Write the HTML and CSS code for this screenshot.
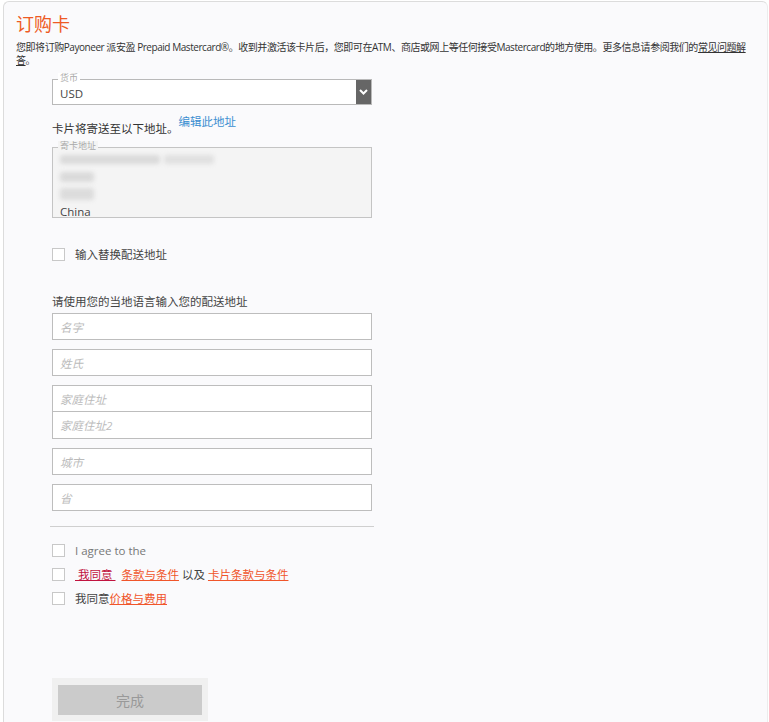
FILE: index.html
```html
<!DOCTYPE html>
<html lang="zh-CN">
<head>
<meta charset="utf-8">
<title>订购卡</title>
<link rel="stylesheet" href="styles.css">
</head>
<body>
<div class="panel">
  <h1 class="title">订购卡</h1>
  <p class="intro">您即将订购Payoneer 派安盈 Prepaid Mastercard®。收到并激活该卡片后，您即可在ATM、商店或网上等任何接受Mastercard的地方使用。更多信息请参阅我们的<a class="faq" href="#">常见问题解答</a>。</p>

  <div class="form">
    <div class="field select-field">
      <span class="legend">货币</span>
      <div class="select">
        <span class="select-value">USD</span>
        <span class="select-arrow">
          <svg width="9" height="6" viewBox="0 0 9 6"><path d="M1 1 L4.5 4.5 L8 1" fill="none" stroke="#fff" stroke-width="2"/></svg>
        </span>
      </div>
    </div>

    <div class="ship-note">
      <span class="ship-text">卡片将寄送至以下地址。</span><a class="edit-link" href="#">编辑此地址</a>
    </div>

    <div class="field address-field">
      <span class="legend">寄卡地址</span>
      <div class="address">
        <div class="addr-line"><span class="blur b1"></span><span class="blur b1b"></span></div>
        <div class="addr-line"><span class="blur b2"></span></div>
        <div class="addr-line"><span class="blur b3"></span></div>
        <div class="addr-line country">China</div>
      </div>
    </div>

    <label class="check alt-check"><span class="box"></span><span class="check-label">输入替换配送地址</span></label>

    <p class="local-note">请使用您的当地语言输入您的配送地址</p>

    <div class="inputs">
      <div class="input">名字</div>
      <div class="input">姓氏</div>
      <div class="input-group">
        <div class="input">家庭住址</div>
        <div class="input">家庭住址2</div>
      </div>
      <div class="input">城市</div>
      <div class="input">省</div>
    </div>

    <hr class="divider">

    <div class="agreements">
      <label class="check"><span class="box"></span><span class="check-label muted">I agree to the</span></label>
      <label class="check"><span class="box"></span><span class="check-label"><a class="link crimson" href="#">&nbsp;我同意&nbsp;</a>&nbsp; <a class="link orange" href="#">条款与条件</a> 以及 <a class="link orange" href="#">卡片条款与条件</a></span></label>
      <label class="check"><span class="box"></span><span class="check-label">我同意<a class="link orange" href="#">价格与费用</a></span></label>
    </div>

    <div class="actions">
      <button class="submit" type="button">完成</button>
    </div>
  </div>
</div>
</body>
</html>
```

FILE: styles.css
```css
html, body {
  margin: 0;
  padding: 0;
  background: #ffffff;
  font-family: "Open Sans", "Noto Sans CJK SC", sans-serif;
  color: #333;
}

.panel {
  margin: 1px 1px 0 3px;
  border: 1px solid #dcdcdc;
  border-bottom: none;
  border-right-color: #ececec;
  border-radius: 6px 6px 0 0;
  background: #fafafc;
  height: 721px;
  overflow: hidden;
  box-sizing: border-box;
  padding: 8px 0 0 12px;
}

.title {
  margin: 0;
  font-size: 18px;
  font-weight: normal;
  color: #ee5a24;
  line-height: 28px;
}

.intro {
  margin: 3px 0 0 0;
  width: 738px;
  font-size: 10px;
  line-height: 13px;
  color: #333;
  letter-spacing: -0.45px;
}

.faq {
  color: #333;
  text-decoration: underline;
}

.form {
  width: 320px;
  margin: 12px 0 0 36px;
}

.field {
  position: relative;
}

.legend {
  position: absolute;
  left: 6px;
  top: -6px;
  font-size: 9px;
  line-height: 10px;
  color: #aaa;
  background: #fafafc;
  padding: 0 2px;
}

.select-field .legend {
  background: #fff;
}

.select {
  height: 26px;
  border: 1px solid #b9b9b9;
  background: #fff;
  display: flex;
  align-items: center;
  box-sizing: border-box;
}

.select-value {
  flex: 1;
  padding-left: 7px;
  padding-top: 2px;
  font-size: 11.5px;
  color: #444;
}

.select-arrow {
  width: 15px;
  align-self: stretch;
  background: #666;
  display: flex;
  align-items: center;
  justify-content: center;
}

.ship-note {
  margin-top: 7px;
  height: 25px;
  display: flex;
  align-items: flex-end;
  font-size: 11.5px;
  color: #333;
}

.ship-text {
  line-height: 16px;
}

.edit-link {
  color: #3b8fd1;
  text-decoration: none;
  align-self: flex-start;
  line-height: 16px;
  margin-top: 2px;
}

.address-field {
  margin-top: 10px;
}

.address-field .legend {
  background: #f4f4f4;
}

.address {
  height: 71px;
  border: 1px solid #c4c4c4;
  background: #f4f4f4;
  box-sizing: border-box;
  padding: 3px 0 0 7px;
}

.addr-line {
  height: 17px;
  display: flex;
  align-items: center;
  gap: 4px;
}

.blur {
  display: block;
  height: 9px;
  background: #dadada;
  filter: blur(2px);
  border-radius: 3px;
}

.b1 { width: 100px; }
.b1b { width: 50px; background: #e0e0e0; }
.b2 { width: 34px; height: 10px; }
.b3 { width: 34px; height: 12px; background: #dcdcdc; }

.country {
  font-size: 11.5px;
  color: #444;
  padding-top: 1px;
}

.check {
  display: flex;
  align-items: center;
  gap: 10px;
  font-size: 11.5px;
  color: #444;
  height: 16px;
}

.box {
  width: 11px;
  height: 11px;
  border: 1px solid #c8c8c8;
  background: #fff;
  flex: none;
}

.alt-check {
  margin-top: 28px;
}

.local-note {
  margin: 32px 0 0 0;
  font-size: 11.5px;
  line-height: 16px;
  color: #444;
}

.inputs {
  margin-top: 3px;
  display: flex;
  flex-direction: column;
  gap: 9px;
}

.input {
  height: 27px;
  border: 1px solid #bdbdbd;
  background: #fff;
  box-sizing: border-box;
  padding-left: 7px;
  display: flex;
  align-items: center;
  font-size: 11.5px;
  font-style: italic;
  color: #bbb;
}

.input-group .input + .input {
  border-top: none;
}

.divider {
  margin: 15px -2px 0 -2px;
  border: none;
  border-top: 1px solid #cfcfcf;
  height: 0;
}

.agreements {
  margin-top: 15px;
  display: flex;
  flex-direction: column;
  gap: 8px;
}

.muted {
  color: #777;
}

.link {
  text-decoration: underline;
}

.crimson {
  color: #c1133f;
}

.orange {
  color: #f0552a;
}

.actions {
  margin-top: 72px;
  width: 156px;
  height: 43px;
  background: #f0f0f0;
  box-sizing: border-box;
  padding: 7px 6px 0 6px;
}

.submit {
  width: 144px;
  height: 30px;
  border: none;
  background: #cbcbcb;
  color: #999;
  font-family: "Open Sans", "Noto Sans CJK SC", sans-serif;
  font-size: 14px;
  padding: 0;
}
```
